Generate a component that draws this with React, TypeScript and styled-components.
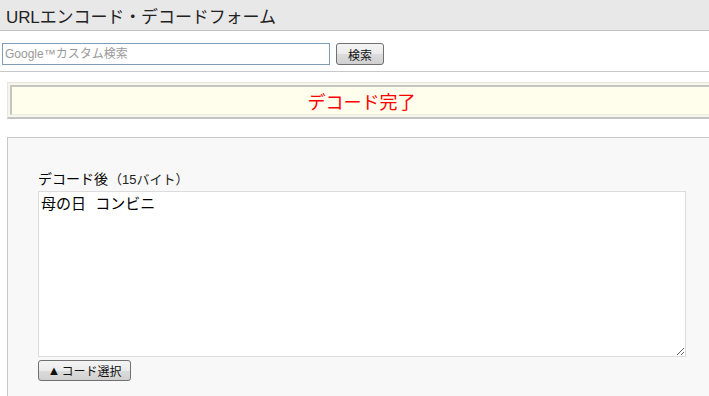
import styled, { createGlobalStyle } from 'styled-components';

const Globalstyles = createGlobalStyle`
html, body {
  margin:0;
  padding:0;
  background:#ffffff;
  font-family:"Liberation Sans","Noto Sans CJK JP",sans-serif;
  color:#222;
}
`

const App = () => {
  return (
    <Page>
      <Globalstyles/>
      <Header>
        <h1>URLエンコード・デコードフォーム</h1>
      </Header>

      <SearchRow>
        <SearchInput placeholder='Google™カスタム検索'/>
        <Button width={48} height={22}>検索</Button>
      </SearchRow>

      <NoticeOuter>
        <NoticeInner>デコード完了</NoticeInner>
      </NoticeOuter>

      <Panel>
        <Label>
          デコード後<small>（15バイト）</small>
        </Label>
        <Output defaultValue='母の日 コンビニ'/>
        <Button width={93} height={21}><Tri>▲</Tri>コード選択</Button>
      </Panel>
    </Page>
  )
}

export default App

const Page = styled.div`
width:709px;
height:396px;
overflow:hidden;
display:flex;
flex-direction:column;
`

const Header = styled.header`
height:30px;
background-color:#e8e8e8;
border-bottom:1px solid #c4c4c4;
display:flex;
align-items:center;
padding-left:6px;
flex-shrink:0;

h1{
  margin:0;
  font-size:17px;
  font-weight:normal;
  color:#222;
  letter-spacing:-0.1px;
}
`

const SearchRow = styled.div`
height:41px;
box-sizing:border-box;
display:flex;
align-items:flex-start;
gap:6px;
padding:12px 0 0 2px;
border-bottom:1px solid #c8c8c8;
flex-shrink:0;
`

const SearchInput = styled.input`
width:322px;
height:18px;
border:1px solid #7f9db9;
padding:1px 2px;
font-size:12px;
font-family:inherit;
outline:none;

&::placeholder{
  color:#999;
}
`

const Button = styled.button<{ width: number; height: number }>`
width:${p => p.width}px;
height:${p => p.height}px;
padding:0;
font-size:12px;
font-family:inherit;
color:#111;
border:1px solid #707070;
border-radius:3px;
background:linear-gradient(#f4f4f4 0%, #ebebeb 50%, #dcdcdc 51%, #d0d0d0 100%);
display:flex;
align-items:center;
justify-content:center;
`

const Tri = styled.span`
font-size:13px;
margin-right:1px;
`

const NoticeOuter = styled.div`
margin:10px 0 0 7px;
width:706px;
height:30px;
padding:2px;
background:#f6f6ea;
border-top:1px solid #e6e6dc;
border-left:1px solid #e6e6dc;
border-bottom:2px solid #c4c4c4;
flex-shrink:0;
`

const NoticeInner = styled.div`
height:100%;
box-sizing:border-box;
background:#fffdec;
border-top:2px solid #c4c4c0;
border-left:2px solid #c4c4c0;
border-bottom:1px solid #ecece0;
color:#f00;
font-size:18px;
display:flex;
align-items:center;
justify-content:center;
padding-right:5px;
`

const Panel = styled.section`
margin:18px 0 0 7px;
flex:1;
background:#f8f8f8;
border-top:1px solid #c8c8c8;
border-left:1px solid #c8c8c8;
padding:31px 0 0 30px;
display:flex;
flex-direction:column;
gap:3px;
`

const Label = styled.div`
font-size:14px;
color:#000;
height:19px;
display:flex;
align-items:flex-end;

small{
  font-size:13px;
  color:#222;
  margin-left:1px;
}
`

const Output = styled.textarea`
width:648px;
height:166px;
box-sizing:border-box;
border:1px solid #dcdcdc;
background:#fff;
font-size:15px;
font-family:inherit;
word-spacing:5px;
padding:0 2px;
resize:both;
outline:none;
margin-bottom:0;
`
